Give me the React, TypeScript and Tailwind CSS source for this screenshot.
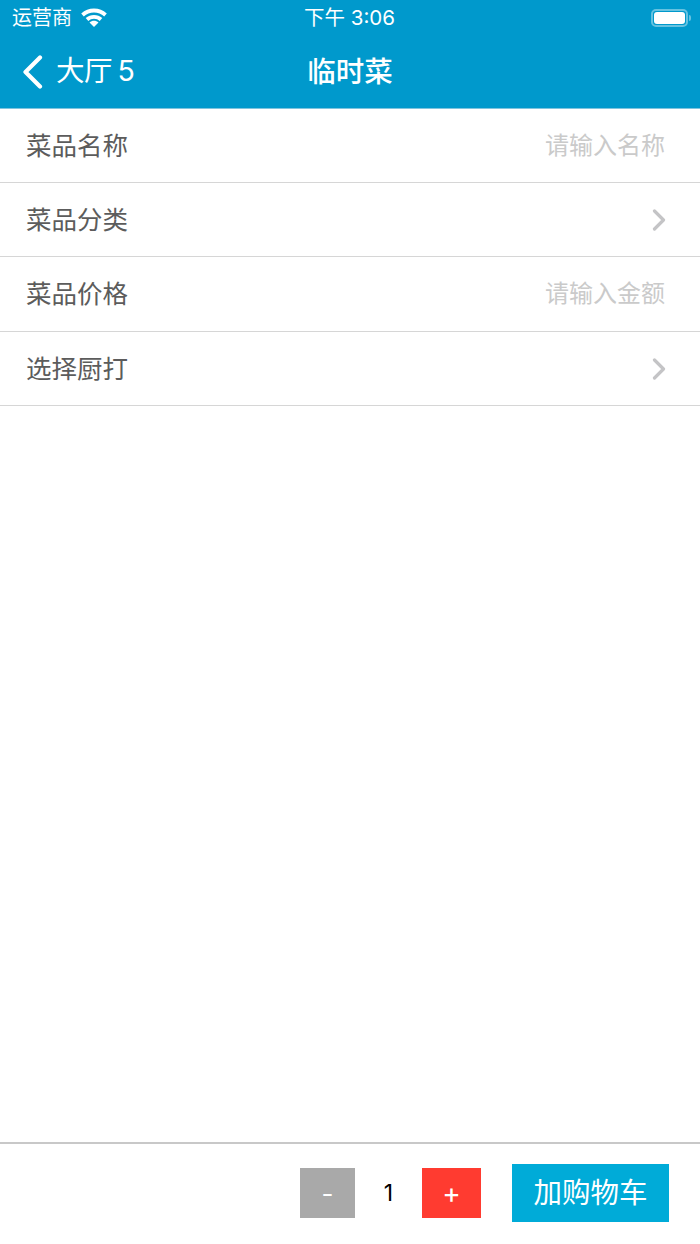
const FONT = "font-['Inter','Noto_Sans_CJK_SC',sans-serif]";

const ROWS = [
  { label: '菜品名称', placeholder: '请输入名称' },
  { label: '菜品分类', arrow: true },
  { label: '菜品价格', placeholder: '请输入金额' },
  { label: '选择厨打', arrow: true },
];

function Wifi() {
  return (
    <svg width="26" height="19" viewBox="0 0 26 19" fill="none" stroke="white" strokeWidth="3.800" className="-mt-[2px]">
      <path d="M1.500 7C8 1 18 1 24.500 7" />
      <path d="M6 11.500c4-3.600 10-3.600 14 0" />
      <path d="M13 19 8.500 14.500c2.500-2.200 6.500-2.200 9 0z" fill="white" stroke="none" />
    </svg>
  );
}

function Battery() {
  return (
    <div className="flex items-center">
      <div className="w-[37px] h-[18px] rounded-[5px] border-2 border-[#66c2e0] p-[1px]">
        <div className="w-full h-full rounded-[3px] bg-white" />
      </div>
      <div className="w-[2px] h-[6px] rounded-r-sm bg-[#66c2e0] ml-[1px]" />
    </div>
  );
}

function Row({ label, placeholder, arrow }: { label: string; placeholder?: string; arrow?: boolean }) {
  return (
    <div className="h-[74.4px] flex items-center justify-between pl-[26px] pr-[34px] pt-[1px] border-b border-[#d6d6d6]">
      <span className="text-[25.5px] text-[#5c5c5c]">{label}</span>
      {placeholder && <span className="text-[24px] mr-[1px] text-[#cacaca]">{placeholder}</span>}
      {arrow && (
        <svg width="14" height="22" viewBox="0 0 14 22" fill="none" stroke="#c4c4c6" strokeWidth="3.200" strokeLinecap="round" strokeLinejoin="round">
          <path d="M2.500 2 11.500 11 2.500 20" />
        </svg>
      )}
    </div>
  );
}

export default function App() {
  return (
    <div className={`${FONT} w-[700px] h-[1244px] flex flex-col bg-white`}>
      {/* ヘッダー */}
      <header className="h-[108.5px] bg-[#0099cc] text-white border-b border-[#7fc4de]">
        <div className="h-[36px] flex items-center justify-between pl-[12px] pr-[9px] relative">
          <div className="flex items-center gap-[9px]">
            <span className="text-[20px]">运营商</span>
            <Wifi />
          </div>
          <span className="absolute left-0 right-0 text-center text-[20.500px] -ml-[1px]">下午 3:06</span>
          <Battery />
        </div>
        <div className="h-[71px] flex items-center px-[22px] relative">
          <svg width="22" height="34" viewBox="0 0 22 34" fill="none" stroke="white" strokeWidth="4.200" strokeLinecap="round" strokeLinejoin="round">
            <path d="M18 2.500 3.500 17 18 31.500" />
          </svg>
          <span className="text-[28.500px] ml-[12px] [word-spacing:-2px] tracking-[-0.5px]">大厅 5</span>
          <span className="absolute left-0 right-0 text-center text-[28.500px] font-medium pt-[1px]">临时菜</span>
        </div>
      </header>

      {/* 入力行 */}
      <main className="flex-1">
        {ROWS.map((r) => (
          <Row key={r.label} {...r} />
        ))}
      </main>

      {/* 下部バー */}
      <footer className="h-[102px] border-t-2 border-[#c8c8c8] flex items-center pl-[300px] pb-[2px]">
        <button className="w-[55px] h-[50px] bg-[#a9a9a9] text-white text-[26px] flex items-center justify-center">-</button>
        <span className="w-[67px] text-center text-[23px] text-black">1</span>
        <button className="w-[59px] h-[50px] bg-[#ff3b30] text-white text-[28px] flex items-center justify-center">+</button>
        <button className="w-[157px] h-[58px] ml-[31px] bg-[#00abd8] text-white text-[28.500px] flex items-center justify-center">加购物车</button>
      </footer>
    </div>
  );
}
